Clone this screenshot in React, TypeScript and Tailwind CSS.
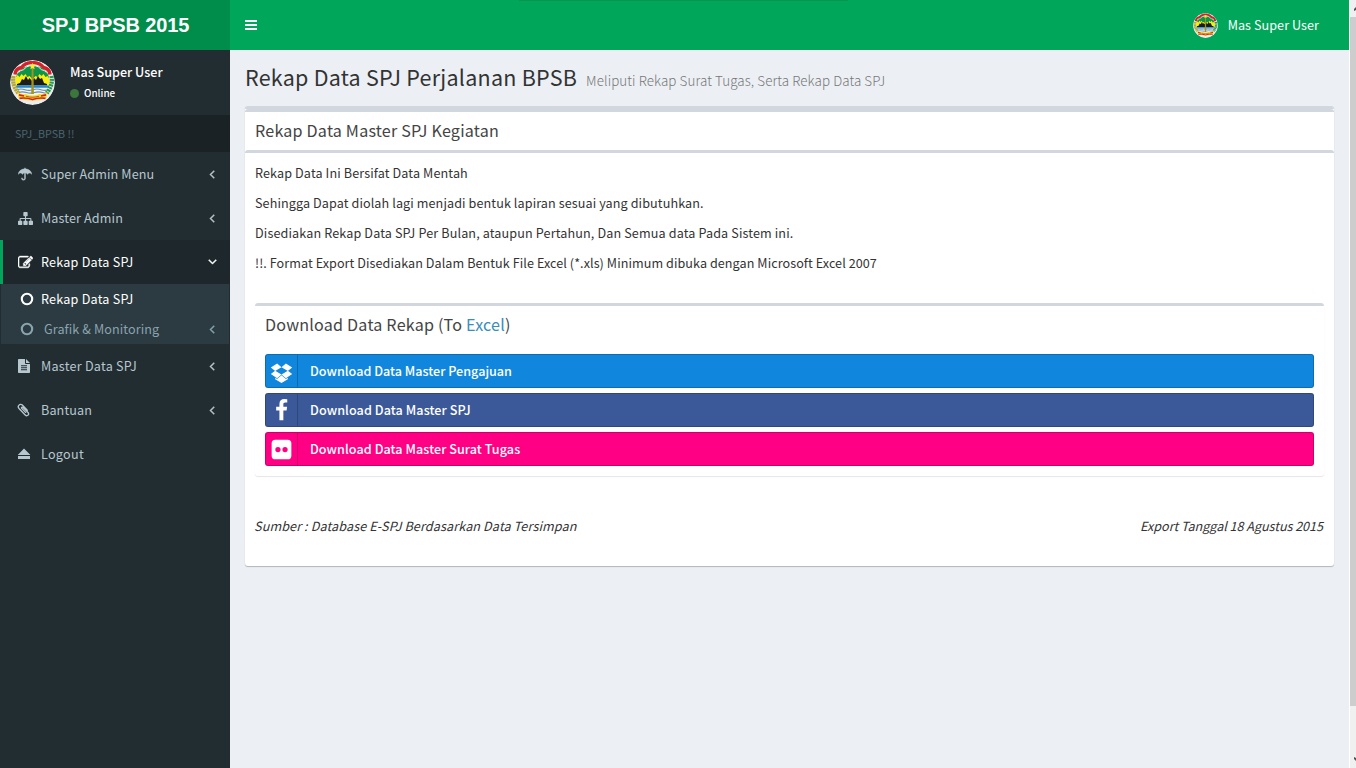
import type { ReactNode } from "react";

function Glyph({ d, className }: { d: string; className: string }) {
  return (
    <svg viewBox="0 0 1792 1792" fill="currentColor" className={`shrink-0 ${className}`}>
      <path d={d} />
    </svg>
  );
}

const ANGLE_LEFT =
  "M1203 544q0 13-10 23l-393 393 393 393q10 10 10 23t-10 23l-50 50q-10 10-23 10t-23-10l-466-466q-10-10-10-23t10-23l466-466q10-10 23-10t23 10l50 50q10 10 10 23z";
const SITEMAP =
  "M1792 1248v320q0 40-28 68t-68 28h-320q-40 0-68-28t-28-68v-320q0-40 28-68t68-28h96v-192h-512v192h96q40 0 68 28t28 68v320q0 40-28 68t-68 28h-320q-40 0-68-28t-28-68v-320q0-40 28-68t68-28h96v-192h-512v192h96q40 0 68 28t28 68v320q0 40-28 68t-68 28h-320q-40 0-68-28t-28-68v-320q0-40 28-68t68-28h96v-192q0-52 38-90t90-38h512v-192h-96q-40 0-68-28t-28-68v-320q0-40 28-68t68-28h320q40 0 68 28t28 68v320q0 40-28 68t-68 28h-96v192h512q52 0 90 38t38 90v192h96q40 0 68 28t28 68z";
const EDIT =
  "M888 1184l116-116-152-152-116 116v56h96v96h56zm440-720q-16-16-33 1l-350 350q-17 17-1 33t33-1l350-350q17-17 1-33zm80 594v190q0 119-84.5 203.5t-203.5 84.5h-832q-119 0-203.5-84.5t-84.5-203.5v-832q0-119 84.5-203.5t203.5-84.5h832q63 0 117 25 15 7 18 23 3 17-9 29l-49 49q-14 14-32 8-23-6-45-6h-832q-66 0-113 47t-47 113v832q0 66 47 113t113 47h832q66 0 113-47t47-113v-126q0-13 9-22l64-64q15-15 35-7t20 29zm-96-738l288 288-672 672h-288v-288zm444 132l-92 92-288-288 92-92q28-28 68-28t68 28l152 152q28 28 28 68t-28 68z";
const DROPBOX =
  "M402 829l494 305-342 285-490-319zm1086 555v108l-490 293v1l-1-1-1 1v-1l-489-293v-108l147 96 342-284v-2l1 1 1-1v2l343 284zM554 273l342 285-494 304-338-270zm836 556l338 271-489 319-343-285zm-151-556l489 319-338 270-494-304z";
// The lowest facet of the open box, centred under the two upper pairs.
const DROPBOX_CENTERED = DROPBOX.replace(
  "m1086 555v108l-490 293v1l-1-1-1 1v-1l-489-293v-108l147 96 342-284v-2l1 1 1-1v2l343 284z",
  "M1386 1384v108l-490 293-490-293v-108l147 96 343-285 343 285z",
);
const FACEBOOK =
  "M1343 12v264h-157q-86 0-116 36t-30 108v189h293l-39 296h-254v759h-306v-759h-255v-296h255v-218q0-186 104-288.5t277-102.5q147 0 228 12z";
const FLICKR =
  "M416 128h960a288 288 0 0 1 288 288v960a288 288 0 0 1-288 288H416a288 288 0 0 1-288-288V416a288 288 0 0 1 288-288zM620 700a205 205 0 1 0 0 410 205 205 0 0 0 0-410zm552 0a205 205 0 1 0 0 410 205 205 0 0 0 0-410z";
const FILE_TEXT =
  "M1152 0v512h512zM1024 0H224q-96 0-96 96v1600q0 96 96 96h1344q96 0 96-96V640H1120q-96 0-96-96zM512 800h768v128H512zm0 256h768v128H512zm0 256h768v128H512z";
const EJECT = "M896 192l790 790q30 42-22 42H148q-52 0-22-42zM128 1152h1536v384H128z";
const UMBRELLA =
  "M896 100q52 0 58 56v72c420 34 750 300 822 656q0 34-30 34c-90-92-176-138-260-138-106 0-178 60-230 150q-24 24-48 0c-60-94-140-150-240-150l-8 0v660c0 150-110 256-260 256s-256-106-256-256q4-60 64-64 60 4 64 64c0 80 50 130 128 130s132-50 132-130V780l-8 0c-100 0-180 56-240 150q-24 24-48 0c-52-90-124-150-230-150-84 0-170 46-260 138q-30 0-30-34c72-356 402-622 822-656v-72q6-56 58-56z";

function Paperclip() {
  return (
    <svg viewBox="0 0 14 14" className="h-[14px] w-[14px] shrink-0" fill="none" stroke="currentColor" strokeWidth="1.35" strokeLinecap="round" strokeLinejoin="round">
      <path d="M8.6 9.4L4.9 5.6C4 4.7 5.1 3.5 6 4.4l4.8 4.900c2 2.100-.6 4.600-2.600 2.600L2 5.500C-.1 3.200 3.100-.1 5.300 2.100l5 5.100" />
    </svg>
  );
}

function Ring() {
  return (
    <svg viewBox="0 0 14 14" className="h-[14px] w-[14px] shrink-0" fill="none" stroke="currentColor" strokeWidth="2.1">
      <circle cx="7" cy="7" r="5.2" />
    </svg>
  );
}

function Crest({ className }: { className: string }) {
  return (
    <svg viewBox="0 0 45 45" className={`shrink-0 rounded-full ${className}`}>
      <circle cx="22.5" cy="22.5" r="22.5" fill="#ececea" />
      <ellipse cx="22.5" cy="19.500" rx="16.500" ry="14" fill="#0f9448" />
      <path d="M5.500 26v-8l2-3 2 2 2-3 2 2 2-2 2 3 2-1 2 2h2l2-2 2 1 2-3 2 2 2-2 2 3 2-1 2 3v7z" fill="#f8ee10" />
      <path d="M7 26v-2l3-1 2-4 2 1 2-4 2 4 1.500-2 2.500 3 2-3 2 2 2-4 2 3 2-1 2 5 3 1v2z" fill="#1b1b18" />
      <path d="M5.500 25.500h34q-.5 8-6 12h-22q-5-4-6-12z" fill="#eef2f4" />
      <path d="M6 26.600h33" stroke="#1f8ad0" strokeWidth="2.200" />
      <path d="M7 29.700q4-1.400 8 0t8 0 8 0 7 0M8.500 32.500q4-1.400 8 0t8 0 8 0 4 0" stroke="#6a8ea6" strokeWidth="1.200" fill="none" />
      <path d="M21.700 8h1.700l.5 26h-2.700z" fill="#a39424" />
      <path d="M5 14.500Q5.500 8.500 11.500 7.500 15 3 20.500 2.600h4Q30 3 33.500 7.500 39.500 8.500 40 14.500" stroke="#d8202a" strokeWidth="3.400" fill="none" />
      <path d="M8.500 12.500q2-2.500 5-2.800 3-3.700 7-4.200M36.500 12.500q-2-2.500-5-2.800-3-3.700-7-4.200" stroke="#fff" strokeWidth=".9" fill="none" />
      <path d="M22.500 3l1 2.100 2.300.2-1.700 1.600.5 2.300-2.100-1.200-2.100 1.200.5-2.300-1.700-1.600 2.300-.2z" fill="#ffe92a" />
      <path d="M3.500 16q-1.700 9.500 4.800 17" stroke="#b3a83e" strokeWidth="4.200" strokeDasharray="2.200 .5" fill="none" />
      <path d="M41.500 16q1.700 9.500-4.800 17" stroke="#2a9657" strokeWidth="4.200" strokeDasharray="2 .8" fill="none" />
      <path d="M7.500 32q4 3 8 2 7 3 14 0 4 1 8-2l-1 6q-14 5-28 0z" fill="#f1dc20" />
      <path d="M9.500 38.300q6.500-1 13 1.200 6.500-2.200 13-1.200M9 34.800l5 1.200M31 36l5-1.200" stroke="#d8202a" strokeWidth="1.700" fill="none" />
      <path d="M16 36.300q6.500 2 13 0" stroke="#c9531f" strokeWidth="1.100" fill="none" />
    </svg>
  );
}

function MenuRow({
  icon,
  label,
  tracking = "tracking-[0.13px]",
  active = false,
  arrow = true,
}: {
  icon: ReactNode;
  label: string;
  tracking?: string;
  active?: boolean;
  arrow?: boolean;
}) {
  return (
    <a
      className={`flex h-11 items-center border-l-[3px] pr-[11px] pl-[14px] ${
        active ? "border-[#00a65a] bg-[#1e282c] text-white" : "border-transparent text-[#b8c7ce]"
      }`}
    >
      <span className="flex w-6 items-center">{icon}</span>
      <span className={`flex-1 text-[12.6px] leading-5 ${tracking}`}>{label}</span>
      {arrow && (
        <Glyph
          d={ANGLE_LEFT}
          className={`h-[14px] w-[14px] stroke-current [stroke-width:60] ${active ? "-rotate-90" : ""}`}
        />
      )}
    </a>
  );
}

function DownloadButton({
  icon,
  label,
  color,
  tracking,
}: {
  icon: string;
  label: string;
  color: string;
  tracking: string;
}) {
  return (
    <a className={`flex h-[34px] items-center rounded-[3px] border border-black/20 text-white ${color}`}>
      <span className="flex h-full w-8 items-center border-r border-black/20 pt-px pl-[4px]">
        <Glyph d={icon} className="h-[23px] w-[23px]" />
      </span>
      <span className={`pl-3 text-[12.6px] leading-5 font-medium ${tracking}`}>{label}</span>
    </a>
  );
}

export default function App() {
  return (
    <div className="flex h-screen w-full overflow-hidden bg-[#ecf0f5] font-['Noto_Sans_CJK_SC',sans-serif] text-[#333]">
      <aside className="flex w-[230px] shrink-0 flex-col bg-[#222d32]">
        <div className="flex h-[50px] items-center justify-center bg-[#008d4c] pl-px font-['Liberation_Sans',sans-serif] text-[20px] font-bold tracking-[-0.12px] text-white">
          SPJ BPSB 2015
        </div>
        <div className="flex h-[65px] items-start p-[10px]">
          <Crest className="h-[45px] w-[45px]" />
          <div className="pt-[3px] pl-[15px] text-white">
            <p className="text-[12.6px] leading-[18px] font-medium">Mas Super User</p>
            <p className="mt-[4px] flex items-center text-[9.9px] leading-4 font-medium">
              <span className="mr-[5px] h-[9px] w-[9px] rounded-full bg-[#3c763d]" />
              Online
            </p>
          </div>
        </div>
        <div className="h-[37px] bg-[#1a2226] pl-[15px] text-[10.7px] leading-[37px] text-[#4b646f]">SPJ_BPSB !!</div>
        <nav>
          <MenuRow
            icon={<Glyph d={UMBRELLA} className="ml-[0.5px] h-[14px] w-[14px] stroke-current [stroke-width:50]" />}
            label="Super Admin Menu"
          />
          <MenuRow icon={<Glyph d={SITEMAP} className="ml-[0.5px] h-[15px] w-[15px]" />} label="Master Admin" />
          <MenuRow
            icon={<Glyph d={EDIT} className="ml-[0.5px] h-[15px] w-[15px] stroke-current [stroke-width:50]" />}
            label="Rekap Data SPJ"
            tracking="tracking-[0.22px]"
            active
          />
          <div className="mx-px h-[60px] bg-[#2c3b41] text-[12.6px] leading-5">
            <div className="flex h-[30px] items-center pl-[19px] text-white">
              <Ring />
              <span className="pl-[7px] tracking-[0.22px]">Rekap Data SPJ</span>
            </div>
            <div className="flex h-[30px] items-center pr-[10px] pl-[19px] text-[#8aa4af]">
              <Ring />
              <span className="flex-1 pl-[10px] tracking-[0.1px]">Grafik &amp; Monitoring</span>
              <Glyph d={ANGLE_LEFT} className="h-[14px] w-[14px] stroke-current [stroke-width:60]" />
            </div>
          </div>
          <MenuRow
            icon={<Glyph d={FILE_TEXT} className="h-[14px] w-[14px]" />}
            label="Master Data SPJ"
            tracking="tracking-[0.25px]"
          />
          <MenuRow icon={<Paperclip />} label="Bantuan" />
          <MenuRow
            icon={<Glyph d={EJECT} className="h-[14px] w-[14px]" />}
            label="Logout"
            tracking="tracking-[0.28px]"
            arrow={false}
          />
        </nav>
      </aside>

      <div className="flex min-w-0 flex-1 flex-col">
        <header className="flex h-[50px] shrink-0 flex-col bg-[#00a65a] text-white">
          <div className="ml-[289px] h-px w-[329px] bg-[#009551]" />
          <div className="flex h-[48px] items-center justify-between pr-[30px] pl-[15px]">
            <div className="flex w-3 flex-col gap-[2px]">
              <span className="h-[2px] bg-white" />
              <span className="h-[2px] bg-white" />
              <span className="h-[2px] bg-white" />
            </div>
            <div className="flex items-center gap-[10px]">
              <Crest className="h-[25px] w-[25px]" />
              <span className="text-[12.6px] leading-5 tracking-[0.06px]">Mas Super User</span>
            </div>
          </div>
        </header>

        <main className="px-[15px]">
          <div className="flex h-14 items-baseline pt-[12px]">
            <h1 className="text-[21.5px] leading-[30px] tracking-[0.25px]">Rekap Data SPJ Perjalanan BPSB</h1>
            <small className="pl-[9px] text-[13.4px] leading-5 font-light tracking-[0.08px] text-[#777]">
              Meliputi Rekap Surat Tugas, Serta Rekap Data SPJ
            </small>
          </div>

          <section className="h-[460px] rounded-[3px] border-t-[3px] border-[#d2d6de] bg-white shadow-[0_1px_1px_rgba(0,0,0,0.25)]">
            <div className="h-[41px] rounded-t-[3px] border-t-[3px] border-[#d2d6de] px-[10px] pt-[8px]">
              <h3 className="text-[16.1px] leading-5 tracking-[0.21px] text-[#444]">Rekap Data Master SPJ Kegiatan</h3>
            </div>
            <div className="rounded-t-[3px] border-t-[3px] border-[#d2d6de] px-[10px] pt-[10px]">
              <div className="flex flex-col gap-[10px] text-[12.6px] leading-5">
                <p className="tracking-[0.12px]">Rekap Data Ini Bersifat Data Mentah</p>
                <p className="tracking-[0.1px]">
                  Sehingga Dapat diolah lagi menjadi bentuk lapiran sesuai yang dibutuhkan.
                </p>
                <p className="tracking-[0.13px]">
                  Disediakan Rekap Data SPJ Per Bulan, ataupun Pertahun, Dan Semua data Pada Sistem ini.
                </p>
                <p className="tracking-[0.07px]">
                  !!. Format Export Disediakan Dalam Bentuk File Excel (*.xls) Minimum dibuka dengan Microsoft Excel 2007
                </p>
              </div>
              <section className="mt-[30px] h-[173px] rounded-[3px] border-t-[3px] border-[#d2d6de] px-[10px] pt-[8px] shadow-[0_1px_1px_rgba(0,0,0,0.1)]">
                <h3 className="text-[16.1px] leading-5 tracking-[0.21px] text-[#444]">
                  Download Data Rekap (To <a className="text-[#3c8dbc]">Excel</a>)
                </h3>
                <div className="mt-[20px] flex flex-col gap-[5px]">
                  <DownloadButton
                    icon={DROPBOX_CENTERED}
                    label="Download Data Master Pengajuan"
                    color="bg-[#1087dd]"
                    tracking="tracking-[0.01px]"
                  />
                  <DownloadButton
                    icon={FACEBOOK}
                    label="Download Data Master SPJ"
                    color="bg-[#3b5998]"
                    tracking="tracking-[0.08px]"
                  />
                  <DownloadButton
                    icon={FLICKR}
                    label="Download Data Master Surat Tugas"
                    color="bg-[#ff0084]"
                    tracking="tracking-[0.06px]"
                  />
                </div>
              </section>
              <div className="mt-10 flex justify-between text-[12.6px] leading-5 italic">
                <span className="-ml-px tracking-[0.12px]">Sumber : Database E-SPJ Berdasarkan Data Tersimpan</span>
                <span className="mr-px tracking-[-0.03px]">Export Tanggal 18 Agustus 2015</span>
              </div>
            </div>
          </section>
        </main>
      </div>

      <div className="flex w-[7px] shrink-0 flex-col border-l border-white bg-[#f0f0f0]">
        <div className="flex h-[17px] items-center justify-end">
          <svg viewBox="0 0 2 4" className="h-1 w-[2px]" fill="#505050">
            <path d="M0 2L2 0v3L0 4z" />
          </svg>
        </div>
        <div className="h-[689px] bg-[#cdcdcd]" />
        <div className="flex flex-1 items-end justify-end pb-[7px]">
          <svg viewBox="0 0 2 4" className="h-1 w-[2px]" fill="#505050">
            <path d="M0 0l2 1v3L0 2z" />
          </svg>
        </div>
      </div>
    </div>
  );
}
